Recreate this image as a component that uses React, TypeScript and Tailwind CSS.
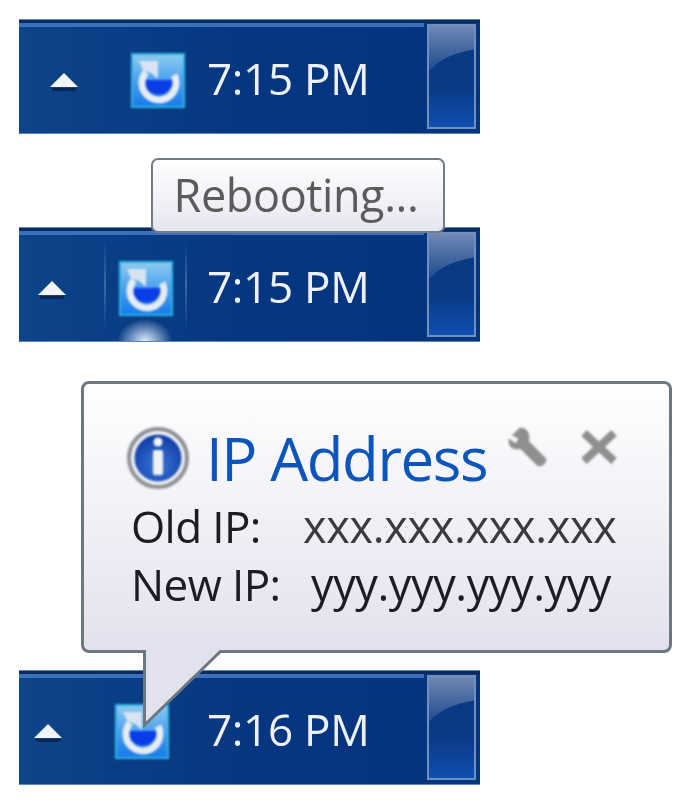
const uiFont = { fontFamily: '"Open Sans", "Noto Sans", sans-serif' };

function RebootIcon() {
  return (
    <svg width="54" height="55" viewBox="0 0 54 55" className="blur-[1px]">
      <defs>
        <linearGradient id="tile" x1="0" y1="0" x2="0" y2="1">
          <stop offset="0" stopColor="#8fcdf0" />
          <stop offset="0.5" stopColor="#4a9fee" />
          <stop offset="1" stopColor="#1479ea" />
        </linearGradient>
      </defs>
      <rect x="1" y="1" width="52" height="53" fill="url(#tile)" stroke="#2fb4e6" strokeWidth="2" />
      <path d="M13 27 A14.5 14.5 0 0 0 42 27 Z" fill="#0a3de6" />
      <path d="M15 19 A17 17 0 1 0 43 22" fill="none" stroke="#e6ecf4" strokeWidth="7" />
      <path d="M8 8 H27 V26 L20 20 L12 17 Z" fill="#d8e4f0" />
    </svg>
  );
}

function TrayArrow() {
  return (
    <svg width="30" height="22" viewBox="0 0 30 22" className="mt-[10px] blur-[0.7px]">
      <path d="M15 2 L29 16 L1 16 Z" fill="#f1f4f8" />
      <path d="M2 17 H28 L26 20 H4 Z" fill="#07193f" opacity="0.7" />
    </svg>
  );
}

function ShowDesktop() {
  return (
    <div className="relative my-[4px] mr-[4px] w-[49px] overflow-hidden border-2 border-[#6f8fbe] bg-[#0b3a85] blur-[0.6px]">
      <svg className="absolute inset-0 h-full w-full" viewBox="0 0 45 103" preserveAspectRatio="none">
        <defs>
          <linearGradient id="shine" x1="0" y1="0" x2="0" y2="1">
            <stop offset="0" stopColor="#6f88b2" />
            <stop offset="1" stopColor="#1f4a8e" />
          </linearGradient>
          <linearGradient id="lower" x1="0" y1="0" x2="0" y2="1">
            <stop offset="0.6" stopColor="#0b3a85" />
            <stop offset="1" stopColor="#0f4fb0" />
          </linearGradient>
        </defs>
        <rect width="45" height="103" fill="url(#lower)" />
        <path d="M0 0 H45 V24 C28 27 12 32 0 46 Z" fill="url(#shine)" />
      </svg>
    </div>
  );
}

function TrayBar({
  time,
  arrowLeft,
  active = false,
}: {
  time: string;
  arrowLeft: number;
  active?: boolean;
}) {
  return (
    <div className="relative flex h-[115px] w-[461px] overflow-hidden border-y border-[#5f86bb] bg-gradient-to-r from-[#0e4488] via-[#06367f] to-[#053480]">
      <div className="absolute inset-x-0 top-0 h-[3px] bg-[#0a2a60]" />
      <div className="absolute left-0 top-[3px] h-[4px] w-[405px] bg-[#3d70bb] blur-[0.5px]" />
      {active && (
        <>
          <div className="absolute left-[85px] top-[12px] h-[90px] w-[2px] bg-gradient-to-b from-transparent via-[#3a68a8] to-transparent" />
          <div className="absolute left-[166px] top-[12px] h-[90px] w-[2px] bg-gradient-to-b from-transparent via-[#3a68a8] to-transparent" />
          <div className="absolute bottom-0 left-[96px] h-[24px] w-[60px] bg-[radial-gradient(ellipse_at_bottom,#dcecff,transparent_65%)]" />
        </>
      )}
      <div className="relative flex w-[188px] items-center" style={{ paddingLeft: arrowLeft }}>
        <TrayArrow />
        <div className="ml-[52px] mt-[8px]">
          <RebootIcon />
        </div>
      </div>
      <span
        className="relative mt-[28px] w-[165px] whitespace-nowrap text-[44px] font-medium leading-[60px] tracking-[-0.3px] text-[#eef2f7] blur-[0.7px]"
        style={uiFont}
      >
        {time}
      </span>
      <div className="ml-auto flex">
        <ShowDesktop />
      </div>
    </div>
  );
}

function RebootTooltip() {
  return (
    <div
      className="relative z-10 ml-[132px] -mb-[6px] flex h-[75px] w-[294px] items-center justify-center rounded-[7px] border-2 border-[#737b84] bg-gradient-to-b from-white to-[#e6e6f0] pb-[2px] pr-[4px] text-[45px] tracking-[-0.4px] text-[#5c5a5a]"
      style={uiFont}
    >
      <span className="blur-[0.6px]">Rebooting...</span>
    </div>
  );
}

function InfoIcon() {
  return (
    <svg width="62" height="62" viewBox="0 0 62 62" className="blur-[0.8px]">
      <defs>
        <radialGradient id="orb" cx="0.5" cy="0.65" r="0.6">
          <stop offset="0" stopColor="#3a78dc" />
          <stop offset="1" stopColor="#123fa8" />
        </radialGradient>
      </defs>
      <circle cx="31" cy="31" r="29" fill="#f2f3f6" stroke="#8d9096" strokeWidth="4" />
      <circle cx="31" cy="31" r="23.5" fill="url(#orb)" />
      <circle cx="31" cy="15" r="4.5" fill="#f4f6fa" />
      <rect x="26" y="23" width="10" height="25" rx="2" fill="#eef1f6" />
    </svg>
  );
}

function IpBalloon() {
  return (
    <div className="relative z-10 ml-[62px] mt-[39px] mb-[17px] h-[272px] w-[591px]">
      <div className="h-full rounded-[8px] border-[3px] border-[#6d7780] bg-gradient-to-b from-white to-[#e2e2ee] pl-[43px] pt-[43px]" style={uiFont}>
        <div className="flex items-center">
          <InfoIcon />
          <span className="ml-[17px] whitespace-nowrap text-[60px] leading-[62px] tracking-[-1.4px] text-[#0b55bd] blur-[0.6px]">IP Address</span>
          <svg width="42" height="40" viewBox="0 0 44 42" className="-mt-[22px] ml-[20px] blur-[0.8px]">
            <path d="M13 1 L5 9 L12 12 L9 17 L2 12 C0 20 6 25 14 23 L32 41 C37 42 42 38 41 33 L23 15 C25 6 20 0 13 1 Z" fill="#8f8f8f" />
          </svg>
          <svg width="36" height="34" viewBox="0 0 36 34" className="-mt-[22px] ml-[32px] blur-[0.8px]">
            <path d="M3 3 L33 31 M33 3 L3 31" stroke="#8f8f8f" strokeWidth="8" />
          </svg>
        </div>
        <div className="ml-[4px] mt-[8px] flex h-[57px] items-center whitespace-nowrap font-medium text-[#1c1c22] blur-[0.6px]">
          <span className="w-[172px] text-[44px] tracking-[-0.6px]">Old IP:</span>
          <span className="text-[45px] tracking-[-0.3px] text-[#3b3b3f]">xxx.xxx.xxx.xxx</span>
        </div>
        <div className="ml-[4px] flex h-[60px] items-center whitespace-nowrap font-medium text-[#1c1c22] blur-[0.6px]">
          <span className="w-[180px] text-[44px] tracking-[-0.6px]">New IP:</span>
          <span className="text-[45px] tracking-[-0.4px]">yyy.yyy.yyy.yyy</span>
        </div>
      </div>
      {/* tail reaches down onto the tray icon */}
      <svg width="84" height="78" viewBox="0 0 84 78" className="absolute left-[62px] top-[269px]">
        <path d="M1.5 0 V76 L80 0 Z" fill="#e2e2ee" />
        <path d="M1.5 0 V75 L79 0" fill="none" stroke="#6d7780" strokeWidth="3" />
      </svg>
    </div>
  );
}

export default function App() {
  return (
    <div className="flex h-[800px] w-[688px] flex-col overflow-hidden bg-white pl-[19px] pt-[19px]">
      <TrayBar time="7:15 PM" arrowLeft={30} />
      <div className="mt-[24px]" />
      <RebootTooltip />
      <TrayBar time="7:15 PM" arrowLeft={18} active />
      <IpBalloon />
      <TrayBar time="7:16 PM" arrowLeft={14} />
    </div>
  );
}
